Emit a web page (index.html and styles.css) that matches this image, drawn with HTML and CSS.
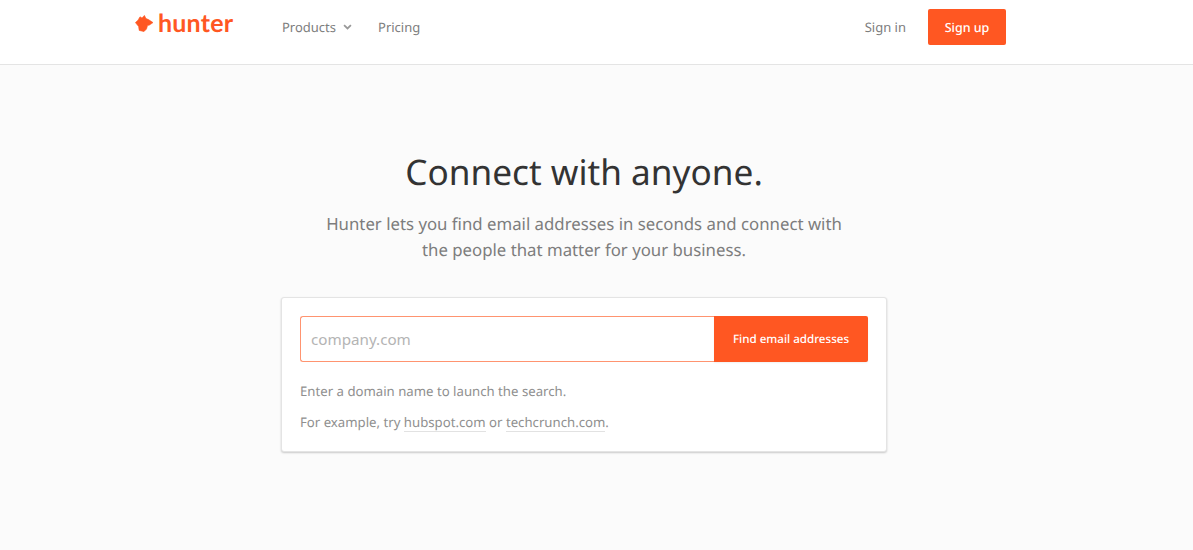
FILE: index.html
```html
<!DOCTYPE html>
<html lang="en">
<head>
<meta charset="utf-8">
<title>Hunter</title>
<link rel="stylesheet" href="styles.css">
</head>
<body>
<header class="topbar">
  <a class="logo" href="#">
    <svg class="logo-icon" width="19" height="17" viewBox="0 0 19 17"><path d="M.4 7.6 3 5.2 5 1.8 7 3 9.4.4 11 3.6 13.5 4.6 18 7.6 14.5 10 12.5 10.6 11.5 14 9 16.6 4.2 15.4 3.6 11.4Z" fill="#ff5722" stroke="#ff5722" stroke-width=".6" stroke-linejoin="round"/></svg>
    <span class="logo-text">hunter</span>
  </a>
  <nav class="nav">
    <a class="nav-link" href="#">Products
      <svg class="chevron" width="9" height="6" viewBox="0 0 10 7"><path d="M1 1.2 5 5.2 9 1.2" fill="none" stroke="#999" stroke-width="2"/></svg>
    </a>
    <a class="nav-link" href="#">Pricing</a>
  </nav>
  <div class="actions">
    <a class="nav-link" href="#">Sign in</a>
    <a class="signup" href="#">Sign up</a>
  </div>
</header>
<main class="main">
  <h1 class="title">Connect with anyone.</h1>
  <p class="lead">Hunter lets you find email addresses in seconds and connect with<br>the people that matter for your business.</p>
  <section class="card">
    <form class="search">
      <input class="search-input" type="text" placeholder="company.com">
      <button class="search-btn" type="button">Find email addresses</button>
    </form>
    <p class="hint hint-first">Enter a domain name to launch the search.</p>
    <p class="hint">For example, try <a href="#">hubspot.com</a> or <a href="#">techcrunch.com</a>.</p>
  </section>
</main>
</body>
</html>
```
FILE: styles.css
```css
* { box-sizing: border-box; }
html, body { height: 100%; }
body {
  margin: 0;
  background: #fbfbfb;
  font-family: "Noto Sans", "Open Sans", sans-serif;
  text-rendering: geometricPrecision;
  overflow: hidden;
}
a { text-decoration: none; }
.topbar {
  height: 65px;
  background: #fff;
  border-bottom: 1px solid #e4e4e4;
  display: flex;
  align-items: flex-start;
  padding: 0 187px 0 135px;
}
.logo {
  display: flex;
  align-items: center;
  height: 45px;
  width: 147px;
  flex: none;
}
.logo-icon { flex: none; margin-top: 2px; }
.logo-text {
  margin-left: 4px;
  padding-top: 1px;
  font-family: "Lato", sans-serif;
  font-weight: 700;
  font-size: 25px;
  line-height: 45px;
  color: #ff5722;
  letter-spacing: 0.2px;
}
.nav {
  display: flex;
  align-items: center;
  gap: 26px;
  height: 54px;
}
.nav-link {
  font-size: 13px;
  line-height: 18px;
  color: #7d7d7d;
  display: inline-flex;
  align-items: center;
}
.chevron { margin-left: 7px; }
.actions {
  margin-left: auto;
  display: flex;
  align-items: center;
  gap: 22px;
  height: 54px;
}
.signup {
  width: 78px;
  height: 36px;
  background: #ff5722;
  color: #fff;
  border-radius: 2px;
  font-size: 12.5px;
  font-weight: 500;
  display: flex;
  align-items: center;
  justify-content: center;
}
.main {
  width: 1168px;
  display: flex;
  flex-direction: column;
  align-items: center;
  padding-top: 82px;
}
.title {
  margin: 0;
  font-weight: 400;
  font-size: 35.2px;
  line-height: 50px;
  color: #333;
}
.lead {
  margin: 14px 0 0;
  font-size: 16.8px;
  line-height: 26px;
  color: #7d7d7d;
  text-align: center;
}
.card {
  margin-top: 34px;
  width: 606px;
  height: 155px;
  background: #fff;
  border: 1px solid #e4e4e4;
  border-radius: 3px;
  box-shadow: 0 1px 2px rgba(0,0,0,.2);
  padding: 18px 18px 0;
}
.search { display: flex; height: 46px; }
.search-input {
  flex: 1;
  min-width: 0;
  height: 46px;
  border: 1px solid #ff9470;
  border-right: 0;
  border-radius: 3px 0 0 3px;
  padding: 0 10px;
  font: 400 15.2px "Noto Sans", sans-serif;
  color: #555;
  outline: 0;
  background: #fff;
}
.search-input::placeholder { color: #b4b4b4; opacity: 1; }
.search-btn {
  width: 154px;
  height: 46px;
  border: 0;
  border-radius: 0 2px 2px 0;
  background: #ff5722;
  color: #fff;
  font: 500 11.6px "Noto Sans", sans-serif;
  text-rendering: geometricPrecision;
  padding: 0;
  box-shadow: 0 1px 2px rgba(0,0,0,.06);
}
.hint {
  margin: 13px 0 0;
  font-size: 13.2px;
  line-height: 18px;
  color: #8f8f8f;
}
.hint-first { margin-top: 20px; }
.hint a {
  color: #8f8f8f;
  border-bottom: 1px solid #e2e2e2;
}
```
